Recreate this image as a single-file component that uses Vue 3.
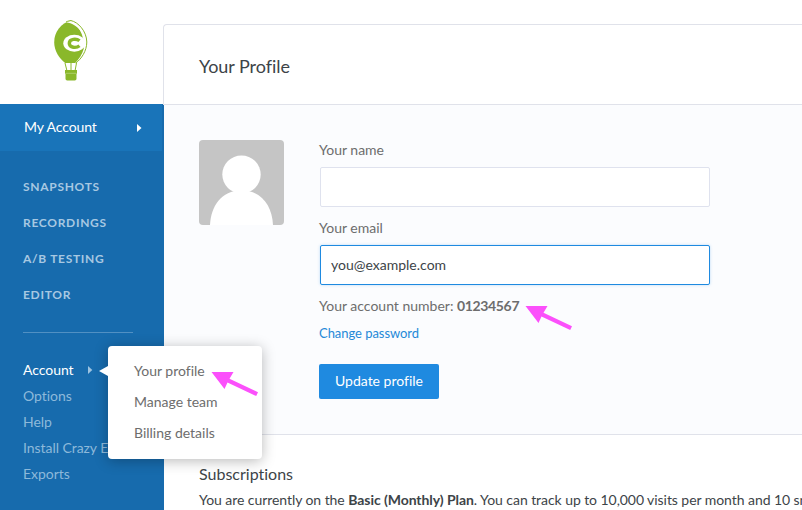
<script setup>
const sections = ['SNAPSHOTS', 'RECORDINGS', 'A/B TESTING', 'EDITOR']
const links = ['Options', 'Help', 'Install Crazy Egg', 'Exports']
const menu = ['Your profile', 'Manage team', 'Billing details']
</script>

<template>
  <div class="app">
    <aside class="sidebar">
      <div class="brand">
        <svg class="logo" width="34" height="62" viewBox="0 0 34 62">
          <path d="M17 .8C8 3 .8 12 .8 22c0 9 5.500 17 11 21h10c5.500-4 11-12 11-21C32.800 12 26 3 17 .8Z" fill="#fff" />
          <path d="M17 .5C7 3 .2 12 .2 22c0 9.500 5.500 17 11 21h10c4-4 7-9 8.500-14C31 20 27 7 17 .5Z" fill="#8ab82a" />
          <path d="M12 2.200C18 3 24 6 28.500 13.500L31.500 12C28 6 23 1.500 17 .8Z" fill="#fff" />
          <path d="M12 2C14 1 15.500 .6 17 .6 24 2 32.600 11 32.800 22c0 9-5.500 17-11 21" fill="none" stroke="#8ab82a" stroke-width="1" />
          <ellipse cx="20.300" cy="23.200" rx="11" ry="8.500" fill="#fff" />
          <path d="M25.500 20.800C22.500 18.300 15.300 18.500 15.300 23.300s7.200 5 10.200 2.500" fill="none" stroke="#8ab82a" stroke-width="3.400" />
          <path d="M11 43l2 8M17 43V51M22.500 43L21 51" stroke="#8ab82a" stroke-width="1" fill="none" />
          <path d="M11 50h12v3.500H11zM11.500 53.500h11v5.300q0 1.700-1.700 1.700h-7.600q-1.700 0-1.700-1.700z" fill="#8ab82a" />
          <path d="M12 53.300h10" stroke="#c5dd92" stroke-width=".6" />
        </svg>
      </div>
      <nav class="nav">
        <div class="current">
          <span>My Account</span>
          <svg width="5" height="8" viewBox="0 0 5 8"><path d="M0 0l4.500 4L0 8z" fill="#fff" /></svg>
        </div>
        <div class="sections">
          <a v-for="s in sections" :key="s" class="section">{{ s }}</a>
        </div>
        <div class="links">
          <div class="link active">
            <span>Account</span>
            <svg width="5" height="8" viewBox="0 0 5 8"><path d="M0 0l4.300 4L0 8z" fill="#9ec3e0" /></svg>
            <div class="popover">
              <a v-for="m in menu" :key="m">{{ m }}</a>
            </div>
            <svg class="arrow hint" width="48" height="28" viewBox="0 0 48 28"><path d="M.5 1H22.500L18.500 7.800 47 21.200 45.200 25 16.500 11.500 13.500 18Z" fill="#fb50fb" /></svg>
          </div>
          <div v-for="l in links" :key="l" class="link">{{ l }}</div>
        </div>
      </nav>
    </aside>

    <main class="main">
      <header class="head"><h1>Your Profile</h1></header>
      <section class="profile">
        <svg class="avatar" width="85" height="85" viewBox="0 0 85 85">
          <rect width="85" height="85" fill="#c5c5c5" />
          <ellipse cx="42.500" cy="34.500" rx="19.200" ry="19" fill="#fff" />
          <path d="M11 85C12 66 22 51 42.500 50 63 51 73 66 74 85Z" fill="#fff" />
        </svg>
        <form class="form" @submit.prevent>
          <label class="name">Your name</label>
          <div class="field"></div>
          <label class="email">Your email</label>
          <div class="field focused"><span>you@example.com</span></div>
          <p class="number">
            <span class="caption">Your account number:</span><b>01234567</b>
            <svg class="arrow" width="48" height="28" viewBox="0 0 48 28"><path d="M.5 1H22.500L18.500 7.800 47 21.200 45.200 25 16.500 11.500 13.500 18Z" fill="#fb50fb" /></svg>
          </p>
          <a class="change">Change password</a>
          <button class="update">Update profile</button>
        </form>
      </section>
      <section class="subs">
        <h2>Subscriptions</h2>
        <p>You are currently on the <b>Basic (Monthly) Plan</b>. You can track up to 10,000 visits per month and 10 snapshots.</p>
      </section>
    </main>
  </div>
</template>

<style>
body { background: #fff; overflow: hidden; }
</style>

<style scoped>
* { box-sizing: border-box; }
.app { display: flex; width: 802px; height: 510px; overflow: hidden; font-family: Lato, "Liberation Sans", sans-serif; font-size: 14px; font-variant-ligatures: none; color: #6d6d6d; white-space: nowrap; }
.sidebar { width: 164px; flex: none; display: flex; flex-direction: column; }
.brand { height: 104px; flex: none; padding: 20px 0 0 54px; }
.logo { display: block; }
.nav { flex: 1; background: #176bad; color: #a7c8e2; }
.current { width: 162px; height: 47px; padding: 0 20px 0 24px; display: flex; align-items: center; justify-content: space-between; background: #1974b9; color: #fff; }
.current span { line-height: 17px; padding-bottom: 2px; letter-spacing: -0.1px; }
.sections { margin: 18px 31px 0 23px; height: 164px; border-bottom: 1px solid #5190c3; display: flex; flex-direction: column; }
.section { height: 36px; line-height: 36px; font-size: 12px; font-weight: 700; letter-spacing: 0.7px; }
.links { padding: 24px 0 0 23px; }
.link { height: 26px; line-height: 26px; color: #8db9da; letter-spacing: -0.05px; }
.link.active { position: relative; display: flex; align-items: center; gap: 14px; color: #fff; }
.popover { position: absolute; z-index: 2; left: 85px; top: -11px; width: 154px; height: 113px; padding: 9px 26px; border-radius: 4px; background: #fff; box-shadow: 0 2px 14px rgba(0, 0, 0, .28); display: flex; flex-direction: column; color: #6d6d6d; }
.popover::before { content: ""; position: absolute; left: -9px; top: 20px; border: solid transparent; border-width: 5.5px 9px 5.5px 0; border-right-color: #fff; }
.popover a { height: 31px; line-height: 31px; letter-spacing: 0; }
.arrow { position: absolute; z-index: 3; }
.hint { left: 188px; top: 14px; }
.main { flex: 1; min-width: 0; padding-top: 24px; }
.head { height: 81px; margin-left: -1px; border: 1px solid #e0e2ea; border-right: 0; border-top-left-radius: 4px; padding: 2px 0 0 35px; display: flex; align-items: center; }
h1, h2, p { margin: 0; font-weight: 400; color: #3d4448; }
h1 { font-size: 18px; letter-spacing: -0.05px; }
.profile { height: 330px; padding: 35px 0 0 35px; display: flex; gap: 35px; background: #fbfcfe; border-bottom: 1px solid #e0e2ea; }
.avatar { border-radius: 4px; flex: none; }
.form { width: 391px; display: flex; flex-direction: column; align-items: flex-start; }
label { height: 27px; line-height: 19px; }
.email { height: 38px; line-height: 41px; }
.field { width: 390px; margin-left: 1px; height: 40px; flex: none; border: 1px solid #dfe2ee; border-radius: 2px; background: #fff; line-height: 38px; padding-left: 10px; color: #3d4448; }
.focused { border-color: #1f8ae0; box-shadow: 0 0 3px rgba(31, 138, 224, .3); }
.number { position: relative; height: 37px; line-height: 41px; color: #6d6d6d; }
.number b { letter-spacing: -0.35px; }
.caption { display: inline-block; width: 138px; }
.number .arrow { left: 206px; top: 19.500px; }
.change { height: 20px; line-height: 22px; font-size: 13px; letter-spacing: -0.05px; color: #2589d8; }
.update { margin-top: 22px; width: 120px; height: 35px; border: 0; padding: 0 0 2px; border-radius: 2px; background: #1f8ae0; color: #fff; font: inherit; }
.subs { padding: 27px 0 0 35px; }
h2 { font-size: 16px; line-height: 24px; }
.subs p { line-height: 28px; letter-spacing: -0.06px; }
</style>
